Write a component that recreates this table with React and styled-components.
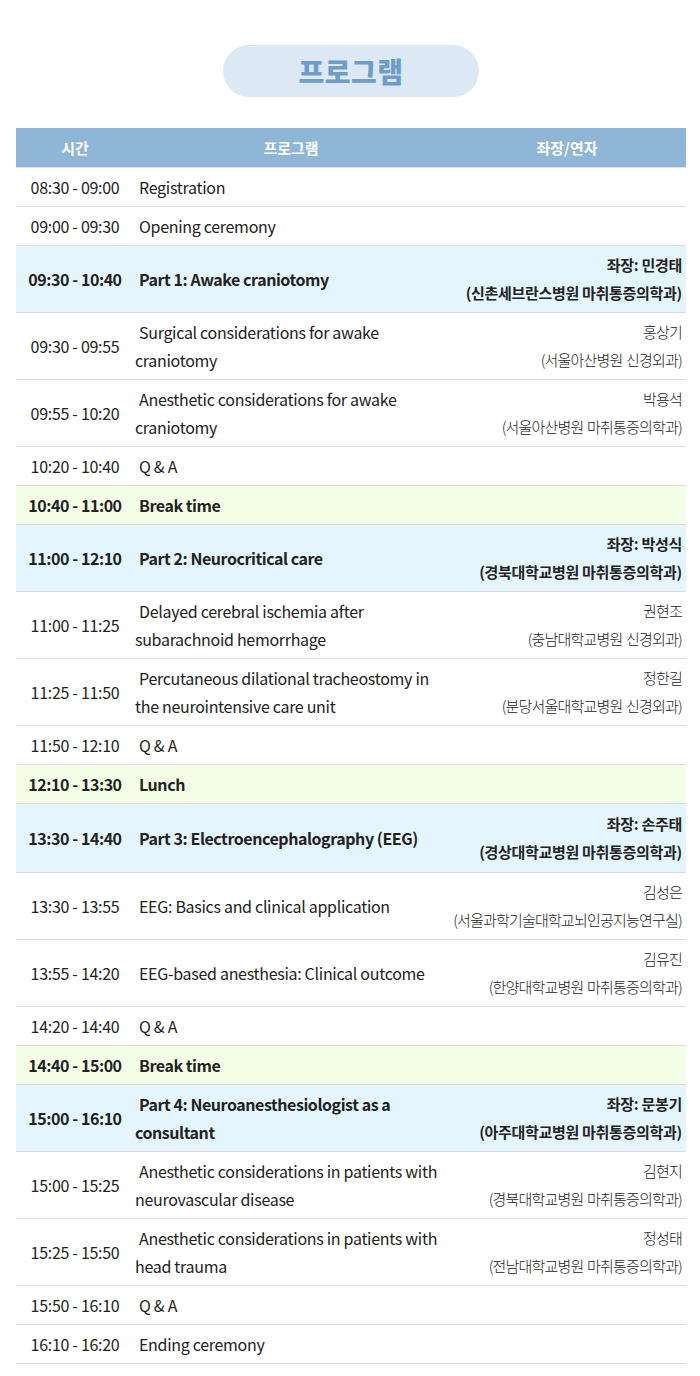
import React from "react";
import styled, { createGlobalStyle } from "styled-components";

const GlobalStyle = createGlobalStyle`
  body {
    margin: 0;
    background: #ffffff;
    font-family: "Noto Sans CJK KR", "Noto Sans", sans-serif;
    color: #222;
  }
`;

const Page = styled.div`
  width: 700px;
  padding: 45px 14px 40px 16px;
  box-sizing: border-box;
`;

const TitleWrap = styled.div`
  display: flex;
  justify-content: center;
  margin-bottom: 31px;
`;

const TitlePill = styled.h2`
  margin: 0;
  width: 256px;
  height: 52px;
  border-radius: 26px;
  background-color: #dce9f5;
  color: #6f9dc8;
  font-size: 28px;
  font-weight: 900;
  display: flex;
  align-items: center;
  justify-content: center;
  letter-spacing: 0.5px;
`;

const Table = styled.table`
  width: 670px;
  border-collapse: collapse;
  table-layout: fixed;
  font-size: 16px;
`;

const HeadCell = styled.th`
  height: 39px;
  padding: 0;
  background-color: #8fb5d7;
  border-bottom: 1px solid #e4e4e4;
  color: #fff;
  font-size: 15px;
  font-weight: 700;
  text-align: center;
  width: ${(p) => p.$w};
`;

const Row = styled.tr`
  background-color: ${(p) =>
    p.$kind === "part" ? "#e5f5fd" : p.$kind === "break" ? "#f4fde6" : "#fff"};
  border-bottom: 1px solid #dcdcdc;
  font-weight: ${(p) => (p.$kind ? 700 : 400)};
  letter-spacing: ${(p) => (p.$kind ? "-0.45px" : "-0.3px")};
`;

const Cell = styled.td`
  padding: ${(p) => (p.$tall ? "6px 0" : "5px 0")};
  line-height: 28px;
  vertical-align: middle;
  white-space: nowrap;
`;

const TimeCell = styled(Cell)`
  text-align: center;
`;

const ProgramCell = styled(Cell)`
  padding-left: 1px;
  text-indent: 4px;
`;

const SpeakerCell = styled(Cell)`
  text-align: right;
  padding-right: 4px;
  font-size: 15px;
  font-weight: ${(p) => (p.$bold ? 700 : 300)};
  letter-spacing: ${(p) => (p.$bold ? "-0.3px" : "-0.8px")};
  word-spacing: ${(p) => (p.$bold ? "0" : "1px")};
`;

const rows = [
  { t: "08:30 - 09:00", p: ["Registration"] },
  { t: "09:00 - 09:30", p: ["Opening ceremony"] },
  { k: "part", t: "09:30 - 10:40", p: ["Part 1: Awake craniotomy"], s: ["좌장: 민경태", "(신촌세브란스병원 마취통증의학과)"] },
  { t: "09:30 - 09:55", p: ["Surgical considerations for awake", "craniotomy"], s: ["홍상기", "(서울아산병원 신경외과)"] },
  { t: "09:55 - 10:20", p: ["Anesthetic considerations for awake", "craniotomy"], s: ["박용석", "(서울아산병원 마취통증의학과)"] },
  { t: "10:20 - 10:40", p: ["Q & A"] },
  { k: "break", t: "10:40 - 11:00", p: ["Break time"] },
  { k: "part", t: "11:00 - 12:10", p: ["Part 2: Neurocritical care"], s: ["좌장: 박성식", "(경북대학교병원 마취통증의학과)"] },
  { t: "11:00 - 11:25", p: ["Delayed cerebral ischemia after", "subarachnoid hemorrhage"], s: ["권현조", "(충남대학교병원 신경외과)"] },
  { t: "11:25 - 11:50", p: ["Percutaneous dilational tracheostomy in", "the neurointensive care unit"], s: ["정한길", "(분당서울대학교병원 신경외과)"] },
  { t: "11:50 - 12:10", p: ["Q & A"] },
  { k: "break", t: "12:10 - 13:30", p: ["Lunch"] },
  { k: "part", tall: true, t: "13:30 - 14:40", p: ["Part 3: Electroencephalography (EEG)"], s: ["좌장: 손주태", "(경상대학교병원 마취통증의학과)"] },
  { t: "13:30 - 13:55", p: ["EEG: Basics and clinical application"], s: ["김성은", "(서울과학기술대학교뇌인공지능연구실)"] },
  { t: "13:55 - 14:20", p: ["EEG-based anesthesia: Clinical outcome"], s: ["김유진", "(한양대학교병원 마취통증의학과)"] },
  { t: "14:20 - 14:40", p: ["Q & A"] },
  { k: "break", t: "14:40 - 15:00", p: ["Break time"] },
  { k: "part", t: "15:00 - 16:10", p: ["Part 4: Neuroanesthesiologist as a", "consultant"], s: ["좌장: 문봉기", "(아주대학교병원 마취통증의학과)"] },
  { t: "15:00 - 15:25", p: ["Anesthetic considerations in patients with", "neurovascular disease"], s: ["김현지", "(경북대학교병원 마취통증의학과)"] },
  { t: "15:25 - 15:50", p: ["Anesthetic considerations in patients with", "head trauma"], s: ["정성태", "(전남대학교병원 마취통증의학과)"] },
  { t: "15:50 - 16:10", p: ["Q & A"] },
  { t: "16:10 - 16:20", p: ["Ending ceremony"] },
];

const Lines = ({ lines }) =>
  lines.map((l, i) => (
    <React.Fragment key={i}>
      {i > 0 && <br />}
      {l}
    </React.Fragment>
  ));

export default function App() {
  return (
    <Page>
      <GlobalStyle />
      <TitleWrap>
        <TitlePill>프로그램</TitlePill>
      </TitleWrap>
      <Table>
        <thead>
          <tr>
            <HeadCell $w="118px">시간</HeadCell>
            <HeadCell $w="314px">프로그램</HeadCell>
            <HeadCell $w="238px">좌장/연자</HeadCell>
          </tr>
        </thead>
        <tbody>
          {rows.map((r, i) => (
            <Row key={i} $kind={r.k}>
              <TimeCell $tall={r.tall}>{r.t}</TimeCell>
              <ProgramCell $tall={r.tall}>
                <Lines lines={r.p} />
              </ProgramCell>
              <SpeakerCell $tall={r.tall} $bold={r.k === "part"}>
                {r.s && <Lines lines={r.s} />}
              </SpeakerCell>
            </Row>
          ))}
        </tbody>
      </Table>
    </Page>
  );
}
